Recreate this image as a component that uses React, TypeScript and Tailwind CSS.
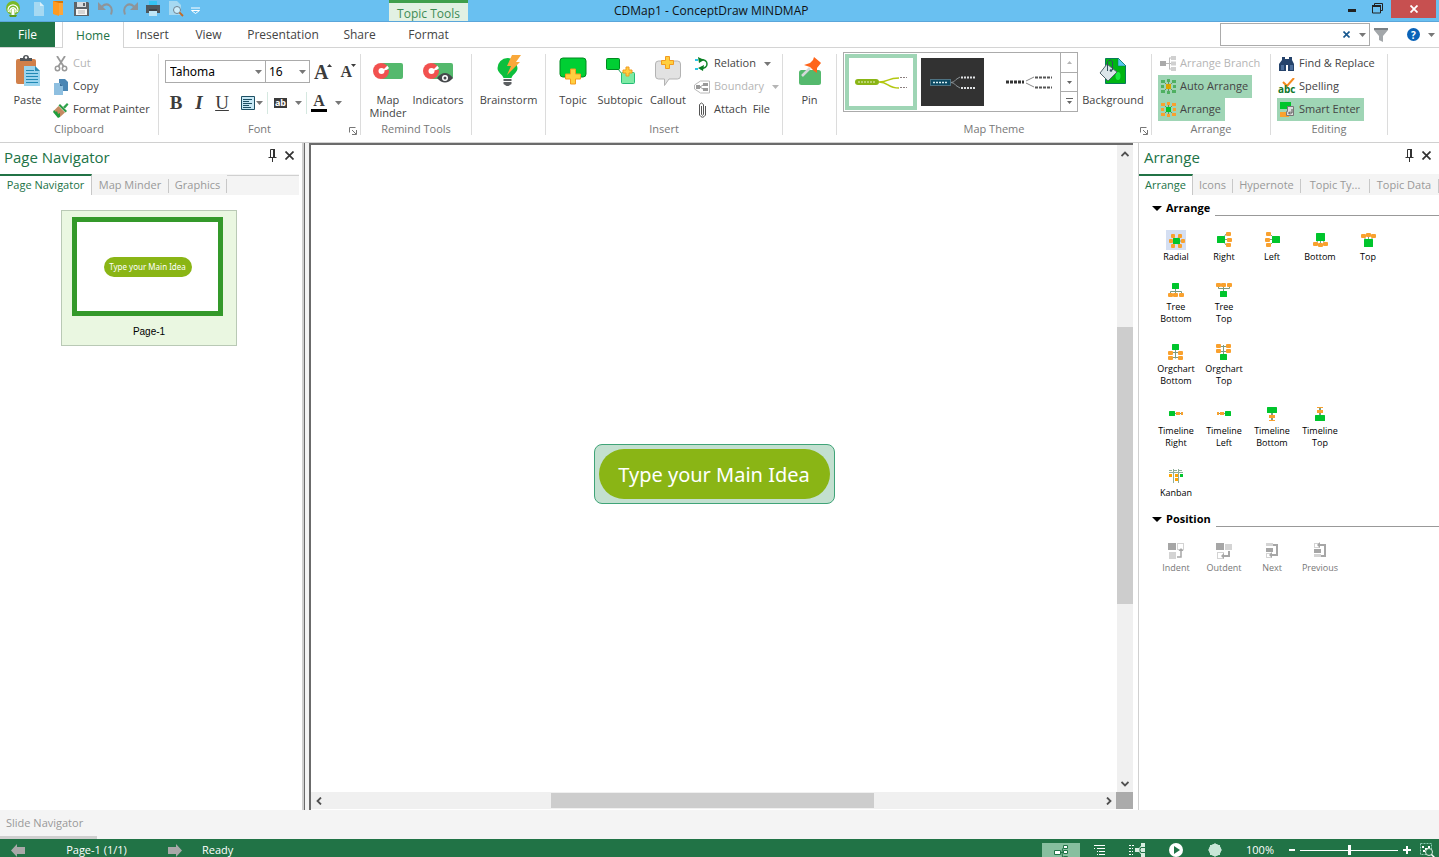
import React, { ReactNode } from "react";

type Kids = { children?: ReactNode };

const ORANGE = "#f9a12e";
const GREEN = "#00c52c";

function Svg({ w, h, children }: { w: number; h: number } & Kids) {
  return (
    <svg width={w} height={h} viewBox={`0 0 ${w} ${h}`} fill="none" aria-hidden="true" className="block shrink-0">
      {children}
    </svg>
  );
}

function Caret({ color = "#777" }: { color?: string }) {
  return (
    <Svg w={7} h={4}>
      <path d="M0 0h7L3.500 4z" fill={color} />
    </Svg>
  );
}

/* ---------- Title bar ---------- */

function TitleBar() {
  return (
    <header className="flex h-[22px] shrink-0 items-stretch border-b border-[#5ba6da] bg-[#69c0f1] text-xs text-[#111]">
      <div className="flex w-[389px] shrink-0 items-start gap-2 pl-1">
        <Svg w={18} h={17}>
          <circle cx="9" cy="8" r="7" fill="#7ab929" />
          <path d="M5 15h8l-1 2H6z" fill="#5d9b1c" />
          <path d="M4.500 12a5 5 0 1 1 9 0M6.500 12.500a3 3 0 1 1 5 0" stroke="#fff" strokeWidth="1.300" />
          <path d="M7.500 9h3v6h-3z" fill="#fff" />
        </Svg>
        <button type="button" aria-label="New" className="pt-px">
          <Svg w={18} h={16}>
            <path d="M4 1h6l4 4v10H4z" fill="#a6d9f2" />
            <path d="M10 1v4h4z" fill="#d9f0fa" />
          </Svg>
        </button>
        <button type="button" aria-label="Open" className="-ml-1 pt-px">
          <Svg w={14} h={16}>
            <path d="M1 0h10v13H1z" fill="#d97706" />
            <path d="M1 0l6 2v13l-6-2z" fill="#ff9a1f" />
            <path d="M7 2h4v12H7z" fill="#fca63a" />
          </Svg>
        </button>
        <button type="button" aria-label="Save" className="pt-px">
          <Svg w={16} h={16}>
            <path d="M0 1h14l1 1v13H0z" fill="#5d6368" />
            <path d="M3 1h9v5H3z" fill="#d8dcdf" />
            <path d="M9 2h2v3H9z" fill="#5d6368" />
            <path d="M2 8h11v6H2z" fill="#f7f7f7" />
            <path d="M4 10h7M4 12h7" stroke="#b5b5b5" />
          </Svg>
        </button>
        <button type="button" aria-label="Undo" className="pt-px">
          <Svg w={16} h={16}>
            <path d="M4 5.500c5-4.500 12-1 9 8" stroke="#8e9499" strokeWidth="2" />
            <path d="M0 1v8h8z" fill="#8e9499" />
          </Svg>
        </button>
        <button type="button" aria-label="Redo" className="pt-px">
          <Svg w={16} h={16}>
            <path d="M12 5.500c-5-4.500-12-1-9 8" stroke="#8e9499" strokeWidth="2" />
            <path d="M16 1v8H8z" fill="#8e9499" />
          </Svg>
        </button>
        <button type="button" aria-label="Print" className="pt-px">
          <Svg w={14} h={16}>
            <path d="M3 0h8v4H3z" fill="#35c3f3" />
            <path d="M0 4h14v8H0z" fill="#50585e" />
            <path d="M3 10h8v5H3z" fill="#bfe6f7" />
            <path d="M3 9h8" stroke="#2a2f33" />
          </Svg>
        </button>
        <button type="button" aria-label="Print preview" className="pt-px">
          <Svg w={16} h={16}>
            <path d="M1 0h8l4 4v10H1z" fill="#a6d9f2" />
            <circle cx="9" cy="9" r="3.500" fill="#cdeefc" stroke="#6e8290" />
            <path d="M11.500 11.500L15 15" stroke="#c26b28" strokeWidth="1.800" />
          </Svg>
        </button>
        <button type="button" aria-label="Customize" className="-ml-1 pt-[7px]">
          <Svg w={14} h={8}>
            <path d="M3 1h9" stroke="#fff" />
            <path d="M3.500 3.500h8l-4 3z" stroke="#fff" />
          </Svg>
        </button>
      </div>
      <div className="flex w-[79px] shrink-0 items-center justify-center border-t-[3px] border-[#3f9f4c] bg-[#e2f1e3] pt-1 text-[#3d8b55]">
        Topic Tools
      </div>
      <h1 className="ml-[146px] flex-1 whitespace-nowrap leading-[21px]">CDMap1 - ConceptDraw MINDMAP</h1>
      <div className="flex items-start pr-[3px]">
        <button type="button" aria-label="Minimize" className="px-2 pt-[9px]">
          <Svg w={8} h={3}>
            <path d="M0 0h8v3H0z" fill="#222" />
          </Svg>
        </button>
        <button type="button" aria-label="Restore" className="px-2 pt-[3px]">
          <Svg w={11} h={11}>
            <path d="M2.500 2V.500h8v7H9M.500 2.500h8v7.500h-8z" stroke="#222" />
            <path d="M0 2h9v2H0z" fill="#222" />
          </Svg>
        </button>
        <button type="button" aria-label="Close" className="flex h-[18px] w-[45px] items-center justify-center bg-[#c75050]">
          <Svg w={8} h={8}>
            <path d="M.500.500l7 7M7.500.500l-7 7" stroke="#fff" strokeWidth="1.800" />
          </Svg>
        </button>
      </div>
    </header>
  );
}

/* ---------- Ribbon tabs ---------- */

function RibbonTabs() {
  const tab = "flex shrink-0 items-center justify-center border-b border-[#d4d4d4] pt-px";
  return (
    <nav className="flex h-[26px] shrink-0 items-stretch bg-white text-xs text-[#444]">
      <button type="button" className="w-[55px] shrink-0 border-b border-[#d4d4d4] bg-[#217346] text-white">File</button>
      <div className="w-[7px] border-b border-[#d4d4d4]" />
      <button type="button" className="w-[62px] shrink-0 border-x border-[#d4d4d4] pt-px text-[#217346]">Home</button>
      <button type="button" className={`${tab} w-[57px]`}>Insert</button>
      <button type="button" className={`${tab} w-[55px]`}>View</button>
      <button type="button" className={`${tab} w-[94px]`}>Presentation</button>
      <button type="button" className={`${tab} w-[59px]`}>Share</button>
      <button type="button" className={`${tab} w-[79px]`}>Format</button>
      <div className="flex flex-1 items-center justify-end border-b border-[#d4d4d4] pr-1">
        <div className="flex h-[23px] w-[150px] items-center border border-[#ababab] pr-[3px]">
          <input aria-label="Search" className="h-full min-w-0 flex-1 bg-transparent px-1 outline-none" />
          <button type="button" aria-label="Clear search" className="mr-[9px]">
            <Svg w={7} h={7}>
              <path d="M.500.500l6 6M6.500.500l-6 6" stroke="#17588f" strokeWidth="1.600" />
            </Svg>
          </button>
          <button type="button" aria-label="Search options"><Caret /></button>
        </div>
        <button type="button" aria-label="Filter" className="ml-1 pt-px">
          <Svg w={14} h={14}>
            <path d="M0 0h14v2L9 8v6l-4-2V8L0 2z" fill="#a3a7aa" />
            <path d="M0 0h14v2H0z" fill="#7b8084" />
          </Svg>
        </button>
        <button type="button" aria-label="Help" className="ml-[19px] flex size-[13px] items-center justify-center rounded-full bg-[#0a63b8] text-[10px] font-bold leading-none text-white">?</button>
        <button type="button" aria-label="Help options" className="ml-2"><Caret /></button>
      </div>
    </nav>
  );
}

/* ---------- Ribbon ---------- */

function Group({ width, label, launcher, children }: { width: string; label?: string; launcher?: boolean } & Kids) {
  return (
    <section className={`flex shrink-0 items-stretch ${width}`}>
      <div className="flex min-w-0 flex-1 flex-col">
        <div className="flex h-[69px]">{children}</div>
        <div className="relative h-4 text-center text-[11px] leading-4 text-[#777]">
          {label}
          {launcher && (
            <button type="button" aria-label={`${label} settings`} className="absolute right-[3px] top-[6px]">
              <Svg w={8} h={8}>
                <path d="M.500 5.500v-5h6M3 3l4 4M7.500 3v4.500H3" stroke="#777" />
              </Svg>
            </button>
          )}
        </div>
      </div>
      <div className="mt-[2px] h-[81px] w-px bg-[#dcdcdc]" />
    </section>
  );
}

function Big({ width, icon, children }: { width: string; icon: ReactNode } & Kids) {
  return (
    <button type="button" className={`flex shrink-0 flex-col items-center pt-[3px] ${width}`}>
      <span className="flex h-8 items-center">{icon}</span>
      <span className="mt-[6px] whitespace-nowrap text-[11px] leading-[13px] text-[#444]">{children}</span>
    </button>
  );
}

function Small({ icon, on, muted, caret, children }: { icon: ReactNode; on?: boolean; muted?: boolean; caret?: boolean } & Kids) {
  return (
    <button
      type="button"
      disabled={muted}
      className={`flex h-[23px] items-center gap-1 whitespace-nowrap pl-[2px] pr-1 text-[11px] ${on ? "bg-[#9fd5b5]" : ""} ${muted ? "text-[#b5b5b5]" : "text-[#444]"}`}
    >
      <span className="flex w-4 justify-center">{icon}</span>
      <span>{children}</span>
      {caret && <span className="ml-1"><Caret color={muted ? "#b5b5b5" : "#777"} /></span>}
    </button>
  );
}

const plus = "h5v5h5v5h-5v5h-5v-5h-5v-5h5z";

const PasteIcon = (
  <Svg w={26} h={32}>
    <rect x="1" y="4" width="20" height="25" rx="2" fill="#d1804a" />
    <path d="M5 6V3h3a3 3 0 0 1 6 0h3v3z" fill="#50555a" />
    <circle cx="11" cy="2.500" r="1.200" fill="#fff" />
    <path d="M9 11h11l5 5v15H9z" fill="#9ad4ee" />
    <path d="M20 11v5h5z" fill="#2c8db5" />
    <path d="M11 15.500h8M11 18.500h12M11 21.500h12M11 24.500h12M11 27.500h12" stroke="#2089b5" strokeWidth="1.200" />
  </Svg>
);

const CutIcon = (
  <Svg w={14} h={16}>
    <path d="M3 0l7 11M11 0L4 11" stroke="#999" strokeWidth="1.800" />
    <circle cx="3.500" cy="12.500" r="2.200" stroke="#999" strokeWidth="1.500" />
    <circle cx="10.500" cy="12.500" r="2.200" stroke="#999" strokeWidth="1.500" />
  </Svg>
);

const CopyIcon = (
  <Svg w={14} h={16}>
    <path d="M5 0h6l3 3v9H5z" fill="#4a86b4" />
    <path d="M0 4h6l3 3v9H0z" fill="#8ebfe0" />
    <path d="M6 4v3h3z" fill="#3a6f9a" />
  </Svg>
);

const PainterIcon = (
  <Svg w={16} h={16}>
    <path d="M10 5l4-4 1.500 1.500L12 6.500z" fill="#2fa34b" />
    <path d="M7 2l7 7-1.500 1.500-7-7z" fill="#2c9a44" />
    <path d="M5.500 4l6.500 6.500L7 15 1 8.500z" fill="#c58a62" />
    <path d="M1 8l2 2 1-1 1 3 2-1v4l-2 1L0 10z" fill="#1f9d3c" />
  </Svg>
);

function Magnet() {
  return (
    <>
      <rect x="8" y="0" width="22" height="16" rx="2" fill="#54b96d" />
      <circle cx="8" cy="8" r="8" fill="#f2514f" />
      <circle cx="8.500" cy="8" r="3" fill="#fff" />
      <path d="M9 8l6-6 2 4z" fill="#fff" />
      <path d="M13 1l3 4-2 2h3V1z" fill="#54b96d" />
    </>
  );
}

const TopicIcon = (
  <Svg w={28} h={28}>
    <rect x="1" y="1" width="26" height="19" rx="3" fill="#00cf33" stroke="#008a20" />
    <path d={`M11.500 12${plus}`} fill="#ffcf3f" stroke="#f39a1f" />
  </Svg>
);

const SubtopicIcon = (
  <Svg w={30} h={28}>
    <path d="M13 12l4 5" stroke="#12a05c" />
    <rect x="1.500" y="1.500" width="13" height="11" rx="1" fill="#00cf33" stroke="#008a20" />
    <rect x="16.500" y="15.500" width="13" height="11" rx="1" fill="#7deba4" stroke="#25bb76" />
    <path d="M21 10h3v3h3v3h-3v3h-3v-3h-3v-3h3z" fill="#ffcf3f" stroke="#f39a1f" />
  </Svg>
);

const CalloutIcon = (
  <Svg w={26} h={30}>
    <path d="M3.500 5h19q3 0 3 3v12q0 3-3 3H14l-4.500 6.500V23h-6q-3 0-3-3V8q0-3 3-3z" fill="#e2e2e2" stroke="#b3b3b3" />
    <path d="M10.500.500h4v4h4v4h-4v4h-4v-4h-4v-4h4z" fill="#ffcf3f" stroke="#f39a1f" />
  </Svg>
);

const PinIcon = (
  <Svg w={24} h={30}>
    <rect x="1" y="14" width="22" height="15" rx="2.500" fill="#54b96d" />
    <path d="M4 20l8-8" stroke="#d5d8da" strokeWidth="2.500" />
    <path d="M16 1l6 5 1 1-4 5v5l-3-2-4-4-6-2 6-2 3-3z" fill="#ff641a" />
  </Svg>
);

const BackgroundIcon = (
  <Svg w={28} h={30}>
    <path d="M6.500 2.500h13l7 7v18h-20z" fill="#00b512" stroke="#087a5a" />
    <path d="M19 2v8h8z" fill="#56c8ee" stroke="#087a5a" strokeWidth=".5" />
    <ellipse cx="19" cy="20" rx="2.500" ry="4" fill="#1bea40" />
    <path d="M8 8l10 8-9 9-8-8z" fill="#dbe5ea" stroke="#50626c" />
    <path d="M8.500 15V5.500q3-3 5 0V14" stroke="#31505e" />
    <circle cx="12" cy="14.500" r="1.300" fill="#31505e" />
  </Svg>
);

function ThemeGreen() {
  return (
    <Svg w={60} h={20}>
      <rect x="4" y="7" width="24" height="6" rx="3" fill="#8ab515" />
      <path d="M28 10c10 0 8-4 20-4M28 10c10 0 8 6 20 6" stroke="#b3c710" strokeWidth="1.500" />
      <path d="M7 10h18" stroke="#e7f0c5" strokeDasharray="2 1" />
      <path d="M49 5.500h7M49 15.500h7" stroke="#8b7f7f" strokeDasharray="2 1" />
    </Svg>
  );
}

function ThemeDark() {
  return (
    <Svg w={60} h={20}>
      <rect x="7.500" y="7.500" width="20" height="6" fill="#0d4a63" stroke="#4f7383" />
      <path d="M10 10.500h14" stroke="#d6edf3" strokeWidth="1.500" strokeDasharray="2 1" />
      <path d="M28 10.500q3 0 5-3l4-2.500M28 10.500q3 0 5 3l4 2.500" stroke="#8b9296" />
      <path d="M38 5.500h14M38 16h14" stroke="#dfe1e3" strokeWidth="2" strokeDasharray="2 1" />
    </Svg>
  );
}

function ThemeLight() {
  return (
    <Svg w={60} h={20}>
      <path d="M8 10h18" stroke="#333" strokeWidth="3" strokeDasharray="3 1" />
      <path d="M28 9l8-4M28 11l8 4" stroke="#888" />
      <path d="M37 5.500h17M37 15.500h17" stroke="#555" strokeWidth="2" strokeDasharray="3 1" />
    </Svg>
  );
}

function Blocks({ center, side }: { center: string; side: string }) {
  return (
    <Svg w={15} h={15}>
      <path d="M7.500 2v11M3 3l9 9M12 3l-9 9" stroke="#6f8a60" />
      <path d="M0 1h4v3H0zM0 6h3v3H0zM0 11h4v3H0zM11 1h4v3h-4zM12 6h3v3h-3zM11 11h4v3h-4zM6 0h3v3H6zM6 12h3v3H6z" fill={side} />
      <path d="M5 5h5v5H5z" fill={center} />
    </Svg>
  );
}

function Ribbon() {
  const letter = "h-5 text-center font-['Liberation_Serif',serif] text-[19px] leading-5 text-[#3c3c3c]";
  return (
    <div className="flex h-[95px] shrink-0 overflow-hidden border-b border-[#d0d0d0] bg-white pt-1">
      <Group width="w-[159px]" label="Clipboard">
        <Big width="ml-1 w-[47px]" icon={PasteIcon}>Paste</Big>
        <div className="flex flex-col items-start">
          <Small icon={CutIcon} muted>Cut</Small>
          <Small icon={CopyIcon}>Copy</Small>
          <Small icon={PainterIcon}>Format Painter</Small>
        </div>
      </Group>

      <Group width="w-[202px]" label="Font" launcher>
        <div className="flex flex-1 flex-col gap-[9px] pl-[6px] pt-2">
          <div className="flex items-center">
            <div className="relative">
              <select aria-label="Font family" className="block h-[23px] w-[101px] appearance-none border border-[#ababab] bg-white pl-1 font-['Noto_Sans',sans-serif] text-xs text-black">
                <option>Tahoma</option>
              </select>
              <span className="pointer-events-none absolute right-1 top-[10px]"><Caret /></span>
            </div>
            <div className="relative -ml-px">
              <select aria-label="Font size" className="block h-[23px] w-[45px] appearance-none border border-[#ababab] bg-white pl-[3px] font-['Noto_Sans',sans-serif] text-xs text-black">
                <option>16</option>
              </select>
              <span className="pointer-events-none absolute right-1 top-[10px]"><Caret /></span>
            </div>
            <button type="button" aria-label="Grow font" className="ml-1 flex font-['Liberation_Serif',serif] text-xl font-bold leading-5 text-[#3c3c3c]">
              A<span className="-ml-px pt-[2px]"><Svg w={5} h={3}><path d="M0 3h5L2.500 0z" fill="#3c3c3c" /></Svg></span>
            </button>
            <button type="button" aria-label="Shrink font" className="ml-2 flex font-['Liberation_Serif',serif] text-base font-bold leading-5 text-[#3c3c3c]">
              A<span className="-ml-px pt-[2px]"><Svg w={5} h={3}><path d="M0 0h5L2.500 3z" fill="#3c3c3c" /></Svg></span>
            </button>
          </div>
          <div className="flex h-[22px] items-center">
            <button type="button" aria-label="Bold" className={`${letter} w-[22px] font-bold`}>B</button>
            <button type="button" aria-label="Italic" className={`${letter} w-6 font-bold italic`}>I</button>
            <button type="button" aria-label="Underline" className={`${letter} w-[22px] underline`}>U</button>
            <button type="button" aria-label="Align text" className="ml-2 flex items-center gap-px">
              <Svg w={14} h={14}>
                <path d="M.500.500h13v13H.500z" fill="#c7e8f5" stroke="#1e5064" />
                <path d="M2 3.500h9M2 5.500h6M2 7.500h9M2 9.500h6M2 11.500h8" stroke="#1e5064" />
              </Svg>
              <Caret />
            </button>
            <span className="ml-1 h-[22px] w-px bg-[#d5e8e0]" />
            <button type="button" aria-label="Text highlight" className="ml-[6px] flex items-center gap-2">
              <span className="flex h-[10px] w-[13px] items-center justify-center bg-[#3a3a3a] pb-px text-[9px] font-bold leading-none text-white">ab</span>
              <Caret />
            </button>
            <span className="ml-1 h-[22px] w-px bg-[#d5e8e0]" />
            <button type="button" aria-label="Font color" className="ml-1 flex items-center gap-2">
              <span className="h-[18px] w-4 border-b-[3px] border-black text-center font-['Liberation_Serif',serif] text-base font-bold leading-[14px] text-[#3c3c3c]">A</span>
              <Caret />
            </button>
          </div>
        </div>
      </Group>

      <Group width="w-[111px]" label="Remind Tools">
        <Big width="ml-1 w-[46px]" icon={<Svg w={30} h={16}><Magnet /></Svg>}>Map<br />Minder</Big>
        <Big
          width="w-[54px]"
          icon={
            <span className="mt-1">
              <Svg w={30} h={20}>
                <Magnet />
                <path d="M14 15q8-10 16 0-8 9-16 0z" fill="#45484b" />
                <circle cx="22" cy="15" r="3" fill="#fff" />
                <circle cx="22" cy="15" r="1.500" fill="#45484b" />
              </Svg>
            </span>
          }
        >
          Indicators
        </Big>
      </Group>

      <Group width="w-[74px]">
        <Big
          width="w-[73px]"
          icon={
            <Svg w={24} h={32}>
              <path d="M10.500 3a10 10 0 0 1 10 10c0 5-5 6-6 10h-8C5.500 19 .500 18 .500 13a10 10 0 0 1 10-10z" fill="#0dbf3d" />
              <path d="M6.500 24h8v2h-8zM6.500 27h8v2l-3 2h-2l-3-2z" fill="#5c5f62" />
              <path d="M15 0h9l-5 7h4L10 20l4-9h-4z" fill="#f9a83a" />
            </Svg>
          }
        >
          Brainstorm
        </Big>
      </Group>

      <Group width="w-[237px]" label="Insert">
        <Big width="ml-1 w-[46px]" icon={TopicIcon}>Topic</Big>
        <Big width="w-[48px]" icon={SubtopicIcon}>Subtopic</Big>
        <Big width="w-[48px]" icon={CalloutIcon}>Callout</Big>
        <div className="flex flex-col items-start">
          <Small
            caret
            icon={
              <Svg w={14} h={14}>
                <path d="M5 2.500c4 0 7 1 7 4.500s-3 4.500-7 4.500" stroke="#168a2d" strokeWidth="1.500" />
                <path d="M3 0l6 3-5 3zM9 8l-6 3 5 3z" fill="#0a7d22" />
                <path d="M0 2h3v2H0zM0 11h3v2H0z" fill="#29c5e8" />
              </Svg>
            }
          >
            Relation
          </Small>
          <Small
            caret
            muted
            icon={
              <Svg w={16} h={14}>
                <path d="M.500 5l6-4h9v12h-9l-6-4z" stroke="#b8b8b8" />
                <path d="M2 5h4v4H2zM9 3h5v3H9zM9 8h5v3H9z" fill="#999" />
                <path d="M6 7l3-2M6 7l3 2" stroke="#999" />
              </Svg>
            }
          >
            Boundary
          </Small>
          <Small
            icon={
              <Svg w={7} h={16}>
                <path d="M2.500 4v8.500q1 1.500 2 0V2.500q-2-3-4 0V13q3 4.500 6 0V4" stroke="#555" />
              </Svg>
            }
          >
            Attach&nbsp; File
          </Small>
        </div>
      </Group>

      <Group width="w-[54px]">
        <Big width="w-[53px]" icon={PinIcon}>Pin</Big>
      </Group>

      <Group width="w-[315px]" label="Map Theme" launcher>
        <div className="ml-[6px] flex h-[60px] w-[235px] border border-[#ababab]">
          <button type="button" aria-label="Green theme" className="m-px flex w-[72px] items-center justify-center border-4 border-[#9fd5b5]"><ThemeGreen /></button>
          <button type="button" aria-label="Dark theme" className="ml-[3px] mt-[5px] flex h-12 w-16 items-center justify-center bg-[#323232]"><ThemeDark /></button>
          <button type="button" aria-label="Light theme" className="ml-3 mt-[5px] flex h-12 w-16 items-center justify-center"><ThemeLight /></button>
          <div className="ml-auto flex w-[17px] flex-col divide-y divide-[#ababab] border-l border-[#ababab]">
            <button type="button" aria-label="Previous themes" className="flex flex-1 items-center justify-center">
              <Svg w={5} h={3}><path d="M0 3h5L2.500 0z" fill="#b5b5b5" /></Svg>
            </button>
            <button type="button" aria-label="Next themes" className="flex flex-1 items-center justify-center">
              <Svg w={5} h={3}><path d="M0 0h5L2.500 3z" fill="#666" /></Svg>
            </button>
            <button type="button" aria-label="All themes" className="flex flex-1 items-center justify-center">
              <Svg w={7} h={7}><path d="M0 0h7v1H0zM1 3h5L3.500 6z" fill="#666" /></Svg>
            </button>
          </div>
        </div>
        <Big width="w-[70px]" icon={BackgroundIcon}>Background</Big>
      </Group>

      <Group width="w-[119px]" label="Arrange">
        <div className="ml-[6px] flex flex-col items-start">
          <Small
            muted
            icon={
              <Svg w={16} h={15}>
                <path d="M5 7.500h4M9.500 2v11M9 2h2M9 7.500h2M9 13h2" stroke="#bbb" />
                <path d="M0 5h6v5H0z" fill="#aaa" />
                <path d="M11 0h5v4h-5zM11 5.500h5v4h-5zM11 11h5v4h-5z" fill="#d0d0d0" />
              </Svg>
            }
          >
            Arrange Branch
          </Small>
          <Small on icon={<Blocks center="#d9a400" side="#4fb061" />}>Auto Arrange</Small>
          <Small on icon={<Blocks center="#00c52c" side="#f9a12e" />}>Arrange</Small>
        </div>
      </Group>

      <Group width="w-[117px]" label="Editing">
        <div className="ml-[6px] flex flex-col items-start">
          <Small
            icon={
              <Svg w={16} h={15}>
                <path d="M3 1h3v2h4V1h3v3l2 4v7H9V9H7v6H0V8l3-4z" fill="#25436b" />
                <path d="M2 9h3v5H2zM11 9h3v5h-3z" fill="#4d6f9c" />
              </Svg>
            }
          >
            Find &amp; Replace
          </Small>
          <Small
            icon={
              <span className="relative block h-[17px] w-4">
                <span className="absolute left-[3px] top-0"><Svg w={13} h={9}><path d="M1 4l4 4 7-8" stroke="#f58a1f" strokeWidth="2" /></Svg></span>
                <span className="absolute -left-px top-[6px] text-[10px] font-bold leading-[10px] text-[#11772b]">abc</span>
              </span>
            }
          >
            Spelling
          </Small>
          <Small
            on
            icon={
              <Svg w={15} h={15}>
                <path d="M0 0h11v7H0z" fill="#00c52c" />
                <path d="M0 10h9v5H0z" fill="#f9a12e" />
                <path d="M7.500 4.500h6v9h-7v-4h1z" fill="#ddd" stroke="#777" />
                <path d="M12 7v4H9M10 9.500L8.500 11l1.500 1.500" stroke="#555" />
              </Svg>
            }
          >
            Smart Enter
          </Small>
        </div>
      </Group>
    </div>
  );
}

/* ---------- Side panels ---------- */

function PanelHeader({ title }: { title: string }) {
  return (
    <div className="flex h-[31px] shrink-0 items-start pl-1 pr-2 pt-1">
      <h2 className="flex-1 text-[15px] leading-5 text-[#217346]">{title}</h2>
      <button type="button" aria-label="Pin panel" className="pt-[2px]">
        <Svg w={9} h={13}>
          <path d="M2.500 8V.500h4V8M.500 8.500h8M4.500 9v4" stroke="#333" />
          <path d="M5 0h2v8H5z" fill="#333" />
        </Svg>
      </button>
      <button type="button" aria-label="Close panel" className="ml-2 pt-1">
        <Svg w={9} h={9}>
          <path d="M.500.500l8 8M8.500.500l-8 8" stroke="#333" strokeWidth="1.700" />
        </Svg>
      </button>
    </div>
  );
}

function PanelTab({ active, width, children }: { active?: boolean; width: string } & Kids) {
  return active ? (
    <button type="button" className={`shrink-0 whitespace-nowrap border-r border-t-2 border-r-[#c8c8c8] border-t-[#217346] bg-white text-[#217346] ${width}`}>
      {children}
    </button>
  ) : (
    <button type="button" className={`flex shrink-0 items-center justify-center whitespace-nowrap pt-[2px] text-[#999] ${width}`}>
      <span className="flex-1">{children}</span>
      <span className="h-[14px] w-px bg-[#c8c8c8]" />
    </button>
  );
}

function PageNavigator() {
  return (
    <aside className="flex w-[302px] shrink-0 flex-col bg-white">
      <PanelHeader title="Page Navigator" />
      <div className="mr-[3px] flex h-[21px] shrink-0 bg-[#f4f4f4] text-[11px]">
        <PanelTab active width="w-[92px]">Page Navigator</PanelTab>
        <PanelTab width="w-[77px]">Map Minder</PanelTab>
        <PanelTab width="w-[58px]">Graphics</PanelTab>
        <div className="mt-px flex-1 border-t border-[#d0d0d0]" />
      </div>
      <button type="button" className="ml-[61px] mt-[15px] flex h-[136px] w-[176px] flex-col items-center border border-[#b9c9b5] bg-[#eaf7e1] pt-[6px]">
        <span className="-ml-[3px] flex h-[99px] w-[151px] items-center justify-center border-[5px] border-[#34992a] bg-white">
          <span className="h-5 w-[88px] rounded-full bg-[#8ab515] font-['Noto_Sans',sans-serif] text-[8px] leading-5 text-white">Type your Main Idea</span>
        </span>
        <span className="mt-2 font-['Liberation_Sans',sans-serif] text-[10px] leading-4 text-black">Page-1</span>
      </button>
    </aside>
  );
}

type Node = { x: number; y: number; w: number; h: number };
const n = (x: number, y: number, w = 5, h = 4): Node => ({ x, y, w, h });

function Layout({ line, green, nodes }: { line: string; green: Node; nodes: Node[] }) {
  return (
    <Svg w={20} h={20}>
      <path d={line} stroke="#7d9a80" />
      {nodes.map((o, i) => (
        <rect key={i} x={o.x} y={o.y} width={o.w} height={o.h} rx={o.h > 3 ? 1 : 0} fill={ORANGE} />
      ))}
      <rect x={green.x} y={green.y} width={green.w} height={green.h} rx=".5" fill={GREEN} />
    </Svg>
  );
}

const arrangeRows: { label: ReactNode; key: string; icon: ReactNode }[][] = [
  [
    { key: "radial", label: "Radial", icon: <Layout line="M6 5l8 12M14 5L6 17M5 11h11" green={n(7, 8, 7, 6)} nodes={[n(5, 4, 4), n(12, 4, 4), n(3, 9, 4), n(15, 9, 4), n(5, 14, 4), n(12, 14, 4)]} /> },
    { key: "right", label: "Right", icon: <Layout line="M10 9.500h4M12 4l-2 3M12 15l-2-3" green={n(3, 6, 8, 7)} nodes={[n(12, 2), n(13, 8), n(12, 13)]} /> },
    { key: "left", label: "Left", icon: <Layout line="M8 9.500h4M8 4l3 3M8 15l3-3" green={n(10, 6, 8, 7)} nodes={[n(4, 2), n(3, 8), n(4, 13)]} /> },
    { key: "bottom", label: "Bottom", icon: <Layout line="M10.500 10v5M8 10l-2 4M13 10l2 4" green={n(6, 3, 9, 8)} nodes={[n(3, 12), n(8, 13), n(13, 12)]} /> },
    { key: "top", label: "Top", icon: <Layout line="M10.500 6v5M6 7l2 3M15 7l-2 3" green={n(6, 9, 9, 8)} nodes={[n(3, 4), n(8, 3), n(13, 4)]} /> },
  ],
  [
    { key: "tb", label: <>Tree<br />Bottom</>, icon: <Layout line="M9.500 8v6M4.500 14v-2.500h11V14" green={n(6, 3, 7, 6)} nodes={[n(2, 13), n(7, 13), n(13, 13)]} /> },
    { key: "tt", label: <>Tree<br />Top</>, icon: <Layout line="M9.500 6v6M4.500 6v2.500h11V6" green={n(6, 11, 7, 6)} nodes={[n(2, 3), n(7, 3), n(13, 3)]} /> },
  ],
  [
    { key: "ob", label: <>Orgchart<br />Bottom</>, icon: <Layout line="M9.500 7v9.500M6 10.500h7M6 15.500h7" green={n(6, 2, 7, 6)} nodes={[n(2, 9), n(12, 9), n(2, 14), n(12, 14)]} /> },
    { key: "ot", label: <>Orgchart<br />Top</>, icon: <Layout line="M9.500 3v10M6 4.500h7M6 9.500h7" green={n(6, 12, 7, 6)} nodes={[n(2, 2), n(12, 2), n(2, 7), n(12, 7)]} /> },
  ],
  [
    { key: "tlr", label: <>Timeline<br />Right</>, icon: <Layout line="M8 9.500h9" green={n(3, 7, 6, 5)} nodes={[n(10, 8, 4, 3), n(15, 8, 2, 3)]} /> },
    { key: "tll", label: <>Timeline<br />Left</>, icon: <Layout line="M4 9.500h9" green={n(11, 7, 6, 5)} nodes={[n(3, 8, 2, 3), n(6, 8, 4, 3)]} /> },
    { key: "tlb", label: <>Timeline<br />Bottom</>, icon: <Layout line="M9.500 9v7M10.500 9v7" green={n(5, 3, 10, 6)} nodes={[n(7, 11, 6, 3), n(7, 16, 6, 1)]} /> },
    { key: "tlt", label: <>Timeline<br />Top</>, icon: <Layout line="M9.500 4v7M10.500 4v7" green={n(5, 11, 10, 6)} nodes={[n(7, 6, 6, 3), n(7, 3, 6, 1)]} /> },
  ],
  [
    {
      key: "kanban",
      label: "Kanban",
      icon: (
        <Svg w={20} h={20}>
          <path d="M3 6.500h14M7.500 3v14M12.500 3v14" stroke="#8fb09a" />
          <path d="M3 4.500h14" stroke="#8fb09a" strokeDasharray="3 2" />
          <path d="M3 8h3v3H3zM9 8h3v3H9zM9 12h3v3H9z" fill="#ffa600" />
          <path d="M14 8h3v3h-3z" fill={GREEN} />
        </Svg>
      ),
    },
  ],
];

const DARK = "#a6a6a6";
const PALE = "#d4d4d4";
const positionRow = [
  {
    key: "Indent",
    icon: (
      <Svg w={20} h={20}>
        <path d="M2 2h8v7H2z" fill={DARK} /><path d="M3 11h7v7H3z" fill={PALE} />
        <path d="M11.500 2.500h6v6h-6z" stroke={DARK} strokeDasharray="1 1" />
        <path d="M11 16h4V9" stroke={DARK} strokeWidth="1.500" /><path d="M12.500 10h5L15 7z" fill={DARK} />
      </Svg>
    ),
  },
  {
    key: "Outdent",
    icon: (
      <Svg w={20} h={20}>
        <path d="M2 2h8v7H2z" fill={DARK} /><path d="M11 3h7v6h-7z" fill={PALE} />
        <path d="M3.500 11.500h6v6h-6z" stroke={DARK} strokeDasharray="1 1" />
        <path d="M15 10v5H9" stroke={DARK} strokeWidth="2" /><path d="M10 12v6l-3-3z" fill={DARK} />
      </Svg>
    ),
  },
  {
    key: "Next",
    icon: (
      <Svg w={20} h={20}>
        <path d="M4 2h7v3H4z" fill={PALE} /><path d="M4 7h7v4H4z" fill={DARK} />
        <path d="M4.500 12.500h5v4h-5z" stroke={DARK} strokeDasharray="1 1" />
        <path d="M11 4h4v10H9" stroke={DARK} strokeWidth="2" /><path d="M10 11v6l-3-3z" fill={DARK} />
      </Svg>
    ),
  },
  {
    key: "Previous",
    icon: (
      <Svg w={20} h={20}>
        <path d="M4 13h7v3H4z" fill={PALE} /><path d="M4 8h7v4H4z" fill={DARK} />
        <path d="M4.500 2.500h5v4h-5z" stroke={DARK} strokeDasharray="1 1" />
        <path d="M9 4h6v11h-4" stroke={DARK} strokeWidth="2" /><path d="M10 1v6L7 4z" fill={DARK} />
      </Svg>
    ),
  },
];

function SectionTitle({ children }: Kids) {
  return (
    <h3 className="flex h-4 items-center gap-1 text-[11px] font-bold leading-4 text-black">
      <Svg w={10} h={5}><path d="M0 0h10L5 5z" fill="#000" /></Svg>
      {children}
      <span className="ml-px flex-1 self-end border-b border-[#999]" />
    </h3>
  );
}

function Tool({ icon, active, muted, children }: { icon: ReactNode; active?: boolean; muted?: boolean } & Kids) {
  return (
    <button type="button" disabled={muted} className={`flex w-12 flex-col items-center gap-px text-[9px] leading-3 ${muted ? "text-[#777]" : "text-black"}`}>
      <span className={active ? "bg-[#d5dff2]" : ""}>{icon}</span>
      <span>{children}</span>
    </button>
  );
}

function ArrangePanel() {
  return (
    <aside className="flex w-[301px] shrink-0 flex-col overflow-hidden border-l border-[#d0d0d0] bg-white">
      <div className="pl-px"><PanelHeader title="Arrange" /></div>
      <div className="flex h-[21px] shrink-0 bg-[#f4f4f4] text-[11px]">
        <PanelTab active width="w-[54px]">Arrange</PanelTab>
        <PanelTab width="w-[40px]">Icons</PanelTab>
        <PanelTab width="w-[68px]">Hypernote</PanelTab>
        <PanelTab width="w-[69px]">Topic Ty...</PanelTab>
        <PanelTab width="w-[69px]">Topic Data</PanelTab>
      </div>
      <div className="pl-[13px] pt-[5px]">
        <SectionTitle>Arrange</SectionTitle>
        <div className="mb-3 mt-[14px] flex flex-col gap-[17px]">
          {arrangeRows.map((row, i) => (
            <div key={i} className="flex items-start">
              {row.map((t) => (
                <Tool key={t.key} icon={t.icon} active={t.key === "radial"}>{t.label}</Tool>
              ))}
            </div>
          ))}
        </div>
        <SectionTitle>Position</SectionTitle>
        <div className="mt-[14px] flex">
          {positionRow.map((t) => (
            <Tool key={t.key} icon={t.icon} muted>{t.key}</Tool>
          ))}
        </div>
      </div>
    </aside>
  );
}

/* ---------- Canvas ---------- */

function Chevron({ d }: { d: string }) {
  return (
    <Svg w={8} h={8}>
      <path d={d} stroke="#505050" strokeWidth="1.800" />
    </Svg>
  );
}

function Canvas() {
  return (
    <main className="flex min-w-0 flex-1 flex-col border-l-2 border-t-2 border-[#6b6b6b] bg-white">
      <div className="flex min-h-0 flex-1">
        <div className="flex min-w-0 flex-1 items-center justify-center pt-[11px]">
          <div className="rounded-[8px] border border-[#3fa478] bg-[#c3e0d0] p-1">
            <div className="flex h-[50px] w-[231px] items-center justify-center whitespace-nowrap rounded-full bg-[#8ab515] pt-[2px] font-['Noto_Sans',sans-serif] text-xl text-white">
              Type your Main Idea
            </div>
          </div>
        </div>
        <div className="flex w-4 shrink-0 flex-col items-center bg-[#f0f0f0]">
          <button type="button" aria-label="Scroll up" className="flex h-[17px] items-center"><Chevron d="M.500 6L4 2.500 7.500 6" /></button>
          <div className="grow-[165]" />
          <div className="w-full grow-[278] bg-[#cdcdcd]" />
          <div className="grow-[171]" />
          <button type="button" aria-label="Scroll down" className="flex h-[17px] items-center"><Chevron d="M.500 2L4 5.500 7.500 2" /></button>
        </div>
      </div>
      <div className="mb-px flex h-[17px] shrink-0 items-center bg-[#f0f0f0]">
        <button type="button" aria-label="Scroll left" className="flex w-[15px] justify-center"><Chevron d="M6 .500L2.500 4 6 7.500" /></button>
        <div className="grow-[226]" />
        <div className="h-[15px] grow-[323] bg-[#cdcdcd]" />
        <div className="grow-[228]" />
        <button type="button" aria-label="Scroll right" className="flex w-[15px] justify-center"><Chevron d="M2 .500L5.500 4 2 7.500" /></button>
        <div className="h-full w-[17px] bg-[#ababab]" />
      </div>
    </main>
  );
}

/* ---------- Status bar ---------- */

function StatusBar() {
  return (
    <footer className="flex h-[18px] shrink-0 items-start overflow-hidden bg-[#217346] text-[11px] text-white">
      <div className="flex h-[22px] w-full shrink-0 items-center">
        <button type="button" aria-label="Previous page" className="ml-[11px]">
          <Svg w={14} h={13}><path d="M0 6.500L6 0v3h8v7H6v3z" fill="#a9a9a9" /></Svg>
        </button>
        <span className="w-[143px] text-center">Page-1 (1/1)</span>
        <button type="button" aria-label="Next page">
          <Svg w={14} h={13}><path d="M14 6.500L8 0v3H0v7h8v3z" fill="#a9a9a9" /></Svg>
        </button>
        <span className="ml-5 flex-1">Ready</span>
        <button type="button" aria-label="Map view" className="flex h-[18px] w-[38px] items-center justify-center self-end bg-[#87bf9f]">
          <Svg w={15} h={15}>
            <path d="M6 7.500h4M8 7.500q0-5 2-5M8 7.500q0 6 2 6" stroke="#217346" />
            <path d="M.500 5.500h6v4h-6zM9.500 .500h4v3h-4zM9.500 5.500h4v3h-4zM9.500 11.500h4v3h-4z" fill="#fff" stroke="#217346" />
          </Svg>
        </button>
        <button type="button" aria-label="Outline view" className="flex w-[38px] justify-center">
          <Svg w={11} h={12}><path d="M0 1.500h11M3 4.500h8M5 7.500h6M5 10.500h6M0 4.500h1M3 7.500h1M3 10.500h1" stroke="#fff" /></Svg>
        </button>
        <button type="button" aria-label="Split view" className="flex w-[38px] justify-center">
          <Svg w={16} h={14}>
            <path d="M0 2.500h6M0 5.500h4M0 8.500h4M0 11.500h4" stroke="#fff" strokeDasharray="2 1" />
            <path d="M6 5h4v4H6zM12 0h4v4h-4zM12 5h4v4h-4zM12 10h4v4h-4z" fill="#d7ede0" />
            <path d="M9 7l4-5M9 7h4M9 7l4 5" stroke="#d7ede0" />
          </Svg>
        </button>
        <button type="button" aria-label="Presentation" className="flex w-[40px] justify-center">
          <Svg w={14} h={14}><circle cx="7" cy="7" r="7" fill="#fff" /><path d="M5 3l6 4-6 4z" fill="#217346" /></Svg>
        </button>
        <button type="button" aria-label="Options" className="flex w-[38px] justify-center">
          <Svg w={14} h={14}>
            <path d="M2 2h10v10H2z" fill="#c8e6d7" /><path d="M7 0l7 7-7 7-7-7z" fill="#c8e6d7" /><circle cx="7" cy="7" r="6.200" fill="#c8e6d7" />
          </Svg>
        </button>
        <span className="w-[52px] text-center">100%</span>
        <button type="button" aria-label="Zoom out" className="ml-[3px]">
          <Svg w={6} h={2}><path d="M0 0h6v2H0z" fill="#fff" /></Svg>
        </button>
        <input
          type="range"
          aria-label="Zoom"
          defaultValue={50}
          className="mx-[5px] h-[11px] w-[98px] appearance-none bg-transparent [&::-webkit-slider-runnable-track]:h-px [&::-webkit-slider-runnable-track]:bg-white [&::-webkit-slider-thumb]:-mt-[5px] [&::-webkit-slider-thumb]:h-[10px] [&::-webkit-slider-thumb]:w-[3px] [&::-webkit-slider-thumb]:appearance-none [&::-webkit-slider-thumb]:bg-white"
        />
        <button type="button" aria-label="Zoom in">
          <Svg w={8} h={8}><path d="M3 0h2v3h3v2H5v3H3V5H0V3h3z" fill="#fff" /></Svg>
        </button>
        <button type="button" aria-label="Zoom to fit" className="ml-[9px] mr-[4px]">
          <Svg w={15} h={15}>
            <path d="M.500.500h11v11H.500z" stroke="#87cbb0" strokeDasharray="2 1" />
            <path d="M2 3h2v2H2zM5 5h3v2H5zM3 7h2v2H3zM8 3h2v2H8z" fill="#fff" />
            <circle cx="9" cy="9" r="3.500" fill="#217346" stroke="#d7ede0" /><path d="M11.500 11.500L15 15" stroke="#fff" strokeWidth="1.500" />
          </Svg>
        </button>
      </div>
    </footer>
  );
}

export default function App() {
  return (
    <div className="flex h-screen flex-col overflow-hidden bg-white font-['Open_Sans','Noto_Sans',sans-serif]">
      <TitleBar />
      <RibbonTabs />
      <Ribbon />
      <div className="flex min-h-0 flex-1">
        <PageNavigator />
        <div className="flex w-[7px] shrink-0 bg-[#f4f4f4]">
          <div className="w-[3px] border-l-2 border-r border-l-[#d0d0d0] border-r-[#6b6b6b] bg-[#d0d0d0]" />
        </div>
        <Canvas />
        <div className="w-[5px] shrink-0 bg-white" />
        <ArrangePanel />
      </div>
      <div className="flex h-[29px] shrink-0 items-stretch bg-[#f4f4f4] text-[11px] text-[#999]">
        <button type="button" className="w-[97px] border-b-[3px] border-[#cfcfcf] pl-[6px] text-left">Slide Navigator</button>
      </div>
      <StatusBar />
    </div>
  );
}
